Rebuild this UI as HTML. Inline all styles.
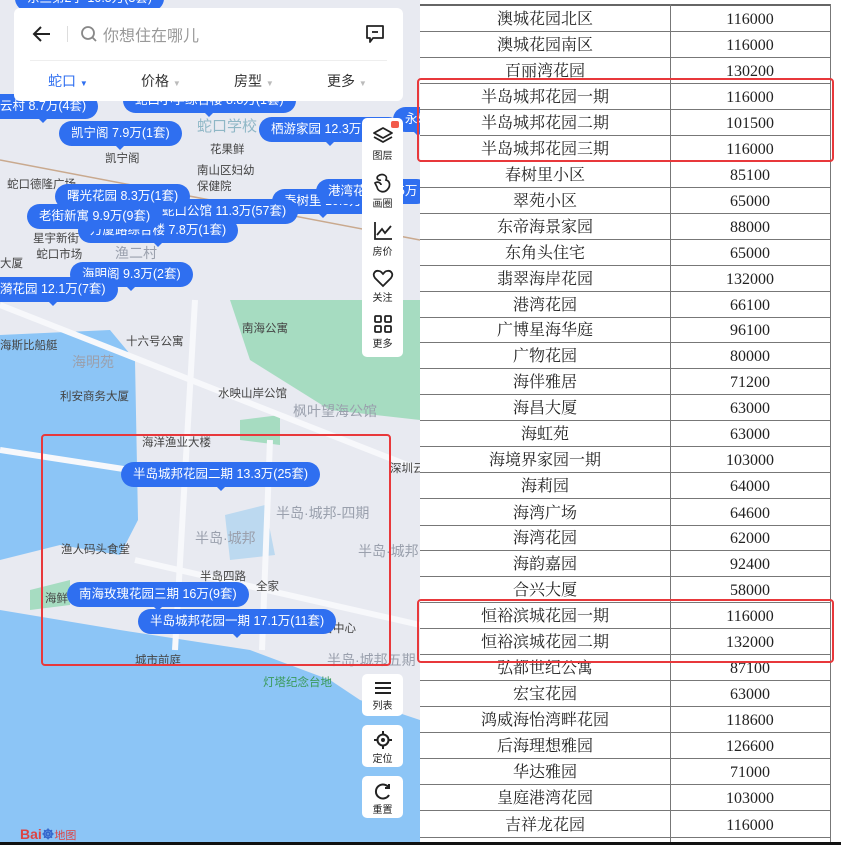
<!DOCTYPE html>
<html><head><meta charset="utf-8"><style>
*{margin:0;padding:0;box-sizing:border-box}
body{width:841px;height:845px;overflow:hidden;background:#fff;position:relative;font-family:"Liberation Sans","Noto Sans CJK SC",sans-serif}
#map{position:absolute;left:0;top:0;width:420px;height:842px;overflow:hidden;background:#e8eaf1}
.pin{position:absolute;height:25px;line-height:25px;background:#2f6ff0;color:#fff;font-size:12.5px;border-radius:13px;padding:0 12px;white-space:nowrap}
.pin:after{content:"";position:absolute;left:50%;bottom:-4px;margin-left:-4px;border:4px solid transparent;border-bottom:0;border-top-color:#2f6ff0}
.lbl{position:absolute;font-size:11.5px;color:#444;white-space:nowrap}
.lg{position:absolute;font-size:14px;color:#9aa0ad;white-space:nowrap}
.btn{position:absolute;left:362px;width:41px;background:#fff;border-radius:5px;text-align:center;font-size:10px;color:#222}
.btn svg{display:block;margin:6px auto 1px}
#tbl{position:absolute;left:420px;top:0;width:421px;height:842px;background:#fff;font-family:"Liberation Serif","Noto Serif CJK SC",serif;color:#222}
.row{position:absolute;left:0;width:410px;height:26px;border-bottom:1px solid #777;font-size:16px;line-height:28px}
.row .a{position:absolute;left:0;width:250px;text-align:center}
.row .b{position:absolute;left:250px;width:160px;text-align:center}
.red{position:absolute;border:2.5px solid #e8383b;border-radius:4px}
</style></head><body>
<div id="map">
<svg width="420" height="842" style="position:absolute;left:0;top:0">
<polygon points="230,300 420,300 420,420 330,410 250,360" fill="#a6dcc1"/>
<polygon points="240,420 280,415 280,445 240,440" fill="#a6dcc1"/>
<polygon points="0,610 120,630 250,650 330,680 360,700 420,720 420,842 0,842" fill="#8cc5f6"/>
<polygon points="0,335 110,330 135,360 138,520 120,555 60,545 0,560" fill="#8cc5f6"/>
<polygon points="30,590 70,580 70,605 30,610" fill="#a6dcc1"/>
<polygon points="225,515 265,505 275,555 230,560" fill="#bcd9f0"/>
<g stroke="#f7f8fb" stroke-width="6" fill="none">
<line x1="0" y1="305" x2="420" y2="470"/>
<line x1="195" y1="300" x2="175" y2="650"/>
<line x1="0" y1="450" x2="130" y2="470"/>
<line x1="135" y1="560" x2="420" y2="625"/>
<line x1="270" y1="440" x2="262" y2="650"/>
</g>
<line x1="0" y1="160" x2="420" y2="240" stroke="#c9a98e" stroke-width="1.5"/>
</svg>
<div class="lg" style="left:197px;top:115px;color:#8fb7c6;font-size:15px">蛇口学校</div>
<div class="lbl" style="left:105px;top:150px">凯宁阁</div>
<div class="lbl" style="left:210px;top:141px">花果鲜</div>
<div class="lbl" style="left:197px;top:162px">南山区妇幼<br>保健院</div>
<div class="lbl" style="left:7px;top:176px">蛇口德隆广场</div>
<div class="lbl" style="left:33px;top:230px">星宇新街<br>&nbsp;蛇口市场</div>
<div class="lg" style="left:115px;top:243px">渔二村</div>
<div class="lbl" style="left:0px;top:255px">大厦</div>
<div class="lbl" style="left:0px;top:337px">海斯比船艇</div>
<div class="lbl" style="left:126px;top:333px">十六号公寓</div>
<div class="lbl" style="left:242px;top:320px">南海公寓</div>
<div class="lg" style="left:72px;top:352px">海明苑</div>
<div class="lbl" style="left:60px;top:388px">利安商务大厦</div>
<div class="lbl" style="left:218px;top:385px">水映山岸公馆</div>
<div class="lg" style="left:293px;top:401px">枫叶望海公馆</div>
<div class="lbl" style="left:142px;top:434px">海洋渔业大楼</div>
<div class="lg" style="left:276px;top:503px">半岛·城邦-四期</div>
<div class="lg" style="left:195px;top:528px">半岛·城邦</div>
<div class="lg" style="left:358px;top:541px">半岛·城邦</div>
<div class="lbl" style="left:61px;top:541px">渔人码头食堂</div>
<div class="lbl" style="left:200px;top:568px">半岛四路</div>
<div class="lbl" style="left:256px;top:578px">全家</div>
<div class="lbl" style="left:45px;top:590px">海鲜</div>
<div class="lbl" style="left:310px;top:620px">销售中心</div>
<div class="lbl" style="left:135px;top:652px">城市前庭</div>
<div class="lg" style="left:327px;top:650px">半岛·城邦五期</div>
<div class="lbl" style="left:263px;top:674px;color:#3a9a5a">灯塔纪念台地</div>
<div class="lbl" style="left:390px;top:460px">深圳云</div>

<div class="pin" style="left:15px;top:-14px">东三第2学 10.5万(3套)</div>
<div class="pin" style="left:-12px;top:94px">云村 8.7万(4套)</div>
<div class="pin" style="left:123px;top:88px">蛇口小学综合楼 8.8万(1套)</div>
<div class="pin" style="left:59px;top:121px">凯宁阁 7.9万(1套)</div>
<div class="pin" style="left:259px;top:117px">栖游家园 12.3万(1套)</div>
<div class="pin" style="left:393px;top:107px">永乐</div>
<div class="pin" style="left:272px;top:189px">春树里 10.5万</div>
<div class="pin" style="left:316px;top:179px">港湾花园 11.5万</div>
<div class="pin" style="left:150px;top:199px">蛇口公馆 11.3万(57套)</div>
<div class="pin" style="left:55px;top:184px">曙光花园 8.3万(1套)</div>
<div class="pin" style="left:78px;top:218px">万厦路综合楼 7.8万(1套)</div>
<div class="pin" style="left:27px;top:204px">老街新寓 9.9万(9套)</div>
<div class="pin" style="left:70px;top:262px">海明阁 9.3万(2套)</div>
<div class="pin" style="left:-12px;top:277px">漪花园 12.1万(7套)</div>
<div class="pin" style="left:121px;top:462px">半岛城邦花园二期 13.3万(25套)</div>
<div class="pin" style="left:67px;top:582px">南海玫瑰花园三期 16万(9套)</div>
<div class="pin" style="left:138px;top:609px">半岛城邦花园一期 17.1万(11套)</div>

<div style="position:absolute;left:14px;top:8px;width:389px;height:93px;background:#fff;border-radius:6px">
<svg width="24" height="24" style="position:absolute;left:16px;top:14px"><path d="M20 12H4M11 5L4 12L11 19" stroke="#222" stroke-width="2" fill="none"/></svg>
<div style="position:absolute;left:53px;top:18px;width:1px;height:16px;background:#ddd"></div>
<svg width="18" height="18" style="position:absolute;left:66px;top:17px"><circle cx="8" cy="8" r="6" stroke="#888" stroke-width="1.8" fill="none"/><line x1="12.5" y1="12.5" x2="16" y2="16" stroke="#888" stroke-width="1.8"/></svg>
<div style="position:absolute;left:89px;top:14px;font-size:16px;color:#999">你想住在哪儿</div>
<svg width="22" height="22" style="position:absolute;left:350px;top:15px"><path d="M3 3H19V15H9L6 19V15H3Z" stroke="#222" stroke-width="1.8" fill="none" stroke-linejoin="round"/><line x1="8" y1="9" x2="14" y2="9" stroke="#222" stroke-width="1.8"/></svg>
<div style="position:absolute;left:16px;right:16px;top:52px;height:1px;background:#eee"></div>
<div style="position:absolute;top:63px;left:34px;font-size:14px;color:#2f6ff0">蛇口 <span style="font-size:8px">▼</span></div>
<div style="position:absolute;top:63px;left:127px;font-size:14px;color:#333">价格 <span style="font-size:8px;color:#bbb">▼</span></div>
<div style="position:absolute;top:63px;left:220px;font-size:14px;color:#333">房型 <span style="font-size:8px;color:#bbb">▼</span></div>
<div style="position:absolute;top:63px;left:313px;font-size:14px;color:#333">更多 <span style="font-size:8px;color:#bbb">▼</span></div>
</div>

<div class="btn" style="top:118px;height:239px">
<div style="position:absolute;right:4px;top:3px;width:8px;height:7px;background:#f25a4a;border-radius:2px"></div>
<svg width="22" height="20" style="margin-top:8px"><path d="M11 2L20 7L11 12L2 7Z M2 11L11 16L20 11" stroke="#222" stroke-width="1.8" fill="none" stroke-linejoin="round"/></svg>图层
<svg width="22" height="22" style="margin-top:10px"><path d="M6 4C10 1 16 3 14 8C18 9 19 14 15 18C12 21 6 20 5 15L3 11C6 9 9 11 9 13M6 4C4 6 6 9 9 8" stroke="#222" stroke-width="1.7" fill="none"/></svg>画圈
<svg width="22" height="22" style="margin-top:10px"><path d="M3 2V19H20 M5 15L10 9L13 13L19 6" stroke="#222" stroke-width="1.8" fill="none"/></svg>房价
<svg width="22" height="20" style="margin-top:10px"><path d="M11 18L3 10C0 6 3 2 7 3C9 3 10 5 11 6C12 5 13 3 15 3C19 2 22 6 19 10Z" stroke="#222" stroke-width="1.8" fill="none"/></svg>关注
<svg width="20" height="20" style="margin-top:10px"><g stroke="#222" stroke-width="1.8" fill="none"><rect x="2" y="2" width="6" height="6" rx="1"/><rect x="12" y="2" width="6" height="6" rx="1"/><rect x="2" y="12" width="6" height="6" rx="1"/><rect x="12" y="12" width="6" height="6" rx="1"/></g></svg>更多
</div>
<div class="btn" style="top:674px;height:42px"><svg width="20" height="16"><path d="M2 3H18M2 8H18M2 13H18" stroke="#222" stroke-width="2"/></svg>列表</div>
<div class="btn" style="top:725px;height:42px"><svg width="20" height="18"><circle cx="10" cy="9" r="5.5" stroke="#222" stroke-width="2" fill="none"/><circle cx="10" cy="9" r="2" fill="#222"/><path d="M10 0V3M10 15V18M1 9H4M16 9H19" stroke="#222" stroke-width="2"/></svg>定位</div>
<div class="btn" style="top:776px;height:42px"><svg width="20" height="18"><path d="M16 6A7 7 0 1 0 16 13M16 2V6H12" stroke="#222" stroke-width="2" fill="none"/></svg>重置</div>
<div style="position:absolute;left:20px;top:826px;font-size:14px;color:#d44;font-weight:bold">Bai<span style="color:#3366cc">☸</span><span style="font-size:11px;font-weight:normal">地图</span></div>
<div class="red" style="left:41px;top:434px;width:350px;height:232px"></div>
</div>
<div style="position:absolute;left:0;top:842px;width:841px;height:3px;background:#111"></div>

<div id="tbl">
<div style="position:absolute;left:0;top:4px;width:410px;height:2px;background:#666"></div>
<div style="position:absolute;left:250px;top:4px;width:1px;height:838px;background:#777"></div>
<div style="position:absolute;left:410px;top:4px;width:1px;height:838px;background:#777"></div>
<div class="row" style="top:6px"><span class="a">澳城花园北区</span><span class="b">116000</span></div>
<div class="row" style="top:32px"><span class="a">澳城花园南区</span><span class="b">116000</span></div>
<div class="row" style="top:58px"><span class="a">百丽湾花园</span><span class="b">130200</span></div>
<div class="row" style="top:84px"><span class="a">半岛城邦花园一期</span><span class="b">116000</span></div>
<div class="row" style="top:110px"><span class="a">半岛城邦花园二期</span><span class="b">101500</span></div>
<div class="row" style="top:136px"><span class="a">半岛城邦花园三期</span><span class="b">116000</span></div>
<div class="row" style="top:162px"><span class="a">春树里小区</span><span class="b">85100</span></div>
<div class="row" style="top:188px"><span class="a">翠苑小区</span><span class="b">65000</span></div>
<div class="row" style="top:214px"><span class="a">东帝海景家园</span><span class="b">88000</span></div>
<div class="row" style="top:240px"><span class="a">东角头住宅</span><span class="b">65000</span></div>
<div class="row" style="top:266px"><span class="a">翡翠海岸花园</span><span class="b">132000</span></div>
<div class="row" style="top:292px"><span class="a">港湾花园</span><span class="b">66100</span></div>
<div class="row" style="top:317px"><span class="a">广博星海华庭</span><span class="b">96100</span></div>
<div class="row" style="top:343px"><span class="a">广物花园</span><span class="b">80000</span></div>
<div class="row" style="top:369px"><span class="a">海伴雅居</span><span class="b">71200</span></div>
<div class="row" style="top:395px"><span class="a">海昌大厦</span><span class="b">63000</span></div>
<div class="row" style="top:421px"><span class="a">海虹苑</span><span class="b">63000</span></div>
<div class="row" style="top:447px"><span class="a">海境界家园一期</span><span class="b">103000</span></div>
<div class="row" style="top:473px"><span class="a">海莉园</span><span class="b">64000</span></div>
<div class="row" style="top:500px"><span class="a">海湾广场</span><span class="b">64600</span></div>
<div class="row" style="top:525px"><span class="a">海湾花园</span><span class="b">62000</span></div>
<div class="row" style="top:551px"><span class="a">海韵嘉园</span><span class="b">92400</span></div>
<div class="row" style="top:577px"><span class="a">合兴大厦</span><span class="b">58000</span></div>
<div class="row" style="top:603px"><span class="a">恒裕滨城花园一期</span><span class="b">116000</span></div>
<div class="row" style="top:629px"><span class="a">恒裕滨城花园二期</span><span class="b">132000</span></div>
<div class="row" style="top:655px"><span class="a">弘都世纪公寓</span><span class="b">87100</span></div>
<div class="row" style="top:681px"><span class="a">宏宝花园</span><span class="b">63000</span></div>
<div class="row" style="top:707px"><span class="a">鸿威海怡湾畔花园</span><span class="b">118600</span></div>
<div class="row" style="top:733px"><span class="a">后海理想雅园</span><span class="b">126600</span></div>
<div class="row" style="top:759px"><span class="a">华达雅园</span><span class="b">71000</span></div>
<div class="row" style="top:785px"><span class="a">皇庭港湾花园</span><span class="b">103000</span></div>
<div class="row" style="top:812px"><span class="a">吉祥龙花园</span><span class="b">116000</span></div>
<div class="red" style="left:-3px;top:78px;width:417px;height:84px"></div>
<div class="red" style="left:-3px;top:599px;width:417px;height:64px"></div>
</div>
</body></html>
